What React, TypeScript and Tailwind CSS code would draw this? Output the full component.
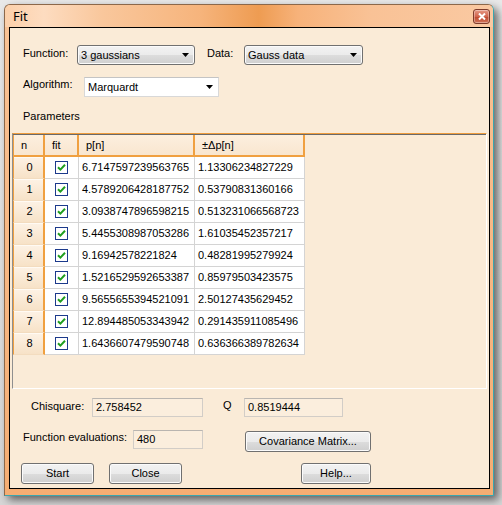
import React from "react";

const P = [
  "6.7147597239563765",
  "4.5789206428187752",
  "3.0938747896598215",
  "5.4455308987053286",
  "9.16942578221824",
  "1.5216529592653387",
  "9.5655655394521091",
  "12.894485053343942",
  "1.6436607479590748",
];
const DP = [
  "1.13306234827229",
  "0.53790831360166",
  "0.513231066568723",
  "1.61035452357217",
  "0.48281995279924",
  "0.85979503423575",
  "2.50127435629452",
  "0.291435911085496",
  "0.636366389782634",
];

const btn =
  "flex items-center justify-center rounded-[3px] border border-[#707070] bg-[linear-gradient(to_bottom,#f2f2f2_0%,#ebebeb_50%,#dddddd_50%,#cfcfcf_100%)] shadow-[inset_0_0_0_1px_#fbfbfb] text-[11px] text-black";

function Arrow() {
  return (
    <svg width="7" height="4" viewBox="0 0 7 4" className="shrink-0">
      <path d="M0 0h7L3.5 4z" fill="#000" />
    </svg>
  );
}

function Combo({ text, w }: { text: string; w: string }) {
  return (
    <div
      className={`${w} h-[20px] flex items-center justify-between pl-[3px] pr-[5px] rounded-[3px] border border-[#707070] bg-[linear-gradient(to_bottom,#f2f2f2_0%,#ebebeb_50%,#dddddd_50%,#cfcfcf_100%)] shadow-[inset_0_0_0_1px_#fbfbfb]`}
    >
      <span className="text-[11px] leading-[13px] text-black">{text}</span>
      <Arrow />
    </div>
  );
}

function Check() {
  return (
    <svg width="13" height="13" viewBox="0 0 13 13">
      <rect x="0.5" y="0.5" width="12" height="12" fill="#fff" stroke="#1c3a8c" />
      <path d="M3 6.2L5.4 8.6L10 3.8" fill="none" stroke="#1f9e1f" strokeWidth="2" />
    </svg>
  );
}

function TextBox({ w, text }: { w: string; text: string }) {
  return (
    <div
      className={`${w} h-[19px] flex items-center pl-[3px] border border-[#d2cdc7] border-t-[#b9b5b0] bg-[#fbeedd] text-[11px] leading-[13px] text-black`}
    >
      {text}
    </div>
  );
}

export default function App() {
  const hdr =
    "h-[22px] flex items-center pl-[7px] border-r-2 border-b-2 border-[#f0a040] bg-[linear-gradient(to_bottom,#fcefdf,#f9e6cf)] text-[11px] text-black";
  return (
    <div className="w-[502px] h-[505px] overflow-hidden bg-[linear-gradient(to_bottom,#e9e9e9,#d6d6d6)] pl-[4px] pt-[4px] font-['Liberation_Sans',Arial,sans-serif]">
      <div className="w-[490px] h-[492px] flex flex-col rounded-t-[6px] border border-[#8c684a] border-r-[#3aa6ae] border-b-[#3aa6ae] bg-[linear-gradient(to_bottom,#f9c396,#f5ad73)] shadow-[4px_4px_8px_rgba(0,0,0,0.55)]">
        {/* title bar */}
        <div className="h-[22px] flex items-center justify-between pl-[8px] pr-[3px] rounded-t-[5px] bg-[linear-gradient(90deg,#fcd0aa_0%,#fddcc0_8%,#f9c79c_20%,#f6b47c_40%,#ee9c52_52%,#f7b27a_60%,#f9c296_75%,#fac9a2_100%)]">
          <span className="text-[13px] leading-[15px] text-black font-['Noto_Sans',Arial,sans-serif]">Fit</span>
          <div className="w-[17px] h-[15px] flex items-center justify-center rounded-[3px] border border-[#7e3b2a] bg-[linear-gradient(to_bottom,#e69a86_0%,#d1644d_50%,#c04a30_55%,#d0745a_100%)] shadow-[inset_0_0_0_1px_rgba(255,255,255,0.35)]">
            <svg width="8" height="7" viewBox="0 0 8 7">
              <path d="M1 0.5L7 6.5M7 0.5L1 6.5" stroke="#fff" strokeWidth="2" />
            </svg>
          </div>
        </div>
        {/* client */}
        <div className="ml-[4px] mr-[3px] h-[462px] border border-black bg-[#faebd7] flex flex-col">
          {/* row 1 */}
          <div className="mt-[17px] pl-[13px] h-[20px] flex items-center text-[11px] text-black">
            <span className="w-[54px] self-start pt-[2px] leading-[13px]">Function:</span>
            <Combo text="3 gaussians" w="w-[118px]" />
            <span className="ml-[12px] w-[37px] self-start pt-[2px] leading-[13px]">Data:</span>
            <Combo text="Gauss data" w="w-[119px]" />
          </div>
          {/* row 2 */}
          <div className="mt-[12px] pl-[13px] h-[20px] flex items-center text-[11px] text-black">
            <span className="w-[61px] self-start pt-[1px] leading-[13px]">Algorithm:</span>
            <div className="w-[135px] h-[20px] flex items-center justify-between pl-[3px] pr-[5px] border border-[#d8d8d8] border-t-[#c4c4c4] bg-white">
              <span className="leading-[13px]">Marquardt</span>
              <Arrow />
            </div>
          </div>
          <div className="mt-[12px] pl-[13px] h-[14px] text-[11px] leading-[14px] text-black">Parameters</div>
          {/* grid panel */}
          <div className="mt-[10px] ml-[2px] w-[475px] h-[256px] border-t border-t-[#ee9c3c] border-l border-l-[#8f8f8f] border-r border-r-[#ffffff] border-b border-b-[#ffffff]">
            <div className="border-t border-t-[#6a6a6a] flex flex-col">
              <div className="flex">
                <div className={`${hdr} w-[32px] border-l border-l-[#f0a040]`}>n</div>
                <div className={`${hdr} w-[34px]`}>fit</div>
                <div className={`${hdr} w-[116px]`}>p[n]</div>
                <div className={`${hdr} w-[110px]`}>±Δp[n]</div>
              </div>
              {P.map((p, i) => (
                <div key={i} className="flex h-[22px] text-[11px] text-black">
                  <div className="w-[32px] h-full flex items-center justify-center pl-[2px] border-l border-l-[#f0a040] border-r-2 border-r-[#f0a040] border-b border-b-[#f3dcbf] shadow-[inset_0_1px_0_#fffaf3] bg-[linear-gradient(to_bottom,#fdf2e5,#f7e2c7)]">
                    {i}
                  </div>
                  <div className="w-[34px] h-full flex items-center justify-center bg-white border-r border-b border-[#d4d4d4]">
                    <Check />
                  </div>
                  <div className="w-[116px] h-full flex items-center pl-[3px] bg-white border-r border-b border-[#d4d4d4]">
                    {p}
                  </div>
                  <div className="w-[110px] h-full flex items-center pl-[3px] bg-white border-r border-b border-[#d4d4d4]">
                    {DP[i]}
                  </div>
                </div>
              ))}
            </div>
          </div>
          {/* chisquare row */}
          <div className="mt-[9px] pl-[21px] flex items-start text-[11px] text-black">
            <span className="w-[61px] pt-[2px] leading-[13px]">Chisquare:</span>
            <TextBox w="w-[111px]" text="2.758452" />
            <span className="ml-[20px] w-[21px] pt-[1px] leading-[13px]">Q</span>
            <TextBox w="w-[99px]" text="0.8519444" />
          </div>
          {/* function evaluations row */}
          <div className="mt-[13px] pl-[13px] flex items-start text-[11px] text-black">
            <span className="w-[110px] pt-[1px] leading-[13px]">Function evaluations:</span>
            <TextBox w="w-[70px]" text="480" />
            <div className={`${btn} ml-[42px] mt-[1px] w-[126px] h-[21px]`}>Covariance Matrix...</div>
          </div>
          {/* buttons row */}
          <div className="mt-[11px] pl-[11px] flex items-start">
            <div className={`${btn} w-[73px] h-[21px]`}>Start</div>
            <div className={`${btn} ml-[15px] w-[73px] h-[21px]`}>Close</div>
            <div className={`${btn} ml-[119px] w-[70px] h-[21px]`}>Help...</div>
          </div>
        </div>
      </div>
    </div>
  );
}
